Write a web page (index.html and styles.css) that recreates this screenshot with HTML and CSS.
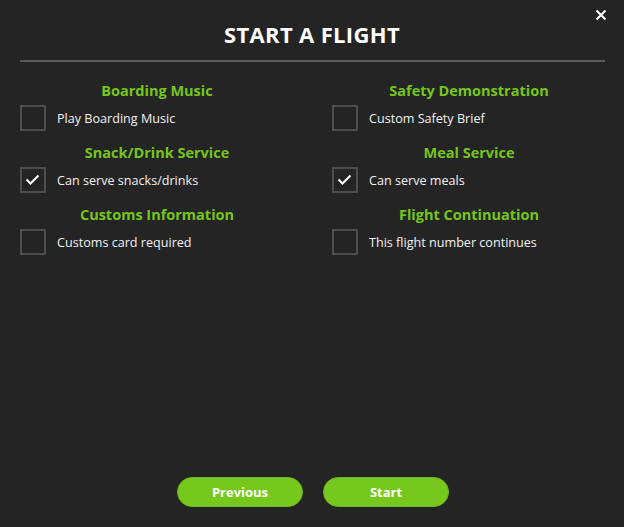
FILE: index.html
```html
<!DOCTYPE html>
<html lang="en">
<head>
<meta charset="utf-8">
<title>Start a Flight</title>
<link rel="stylesheet" href="styles.css">
</head>
<body>
<div class="dialog">
  <header class="header">
    <h1 class="title">START A FLIGHT</h1>
    <button class="close" aria-label="Close">
      <svg width="12" height="12" viewBox="0 0 12 12"><path d="M1.5 1.5 L10.5 10.5 M10.5 1.5 L1.5 10.5" stroke="#fff" stroke-width="2" fill="none"/></svg>
    </button>
  </header>
  <div class="divider"></div>
  <div class="options">
    <section class="option">
      <h2 class="option-title">Boarding Music</h2>
      <label class="row"><span class="box"></span><span class="label">Play Boarding Music</span></label>
    </section>
    <section class="option">
      <h2 class="option-title">Safety Demonstration</h2>
      <label class="row"><span class="box"></span><span class="label">Custom Safety Brief</span></label>
    </section>
    <section class="option">
      <h2 class="option-title">Snack/Drink Service</h2>
      <label class="row"><span class="box"><svg class="check" width="26" height="26" viewBox="0 0 26 26"><path d="M6.5 12.5 L10.5 16.5 L18.5 8.5" stroke="#fff" stroke-width="2" fill="none"/></svg></span><span class="label">Can serve snacks/drinks</span></label>
    </section>
    <section class="option">
      <h2 class="option-title">Meal Service</h2>
      <label class="row"><span class="box"><svg class="check" width="26" height="26" viewBox="0 0 26 26"><path d="M6.5 12.5 L10.5 16.5 L18.5 8.5" stroke="#fff" stroke-width="2" fill="none"/></svg></span><span class="label">Can serve meals</span></label>
    </section>
    <section class="option">
      <h2 class="option-title">Customs Information</h2>
      <label class="row"><span class="box"></span><span class="label">Customs card required</span></label>
    </section>
    <section class="option">
      <h2 class="option-title">Flight Continuation</h2>
      <label class="row"><span class="box"></span><span class="label">This flight number continues</span></label>
    </section>
  </div>
  <div class="actions">
    <button class="btn">Previous</button>
    <button class="btn">Start</button>
  </div>
</div>
</body>
</html>
```
FILE: styles.css
```css
* { box-sizing: border-box; }
html, body {
  margin: 0;
  padding: 0;
  background: #242424;
}
body {
  font-family: "Open Sans", "Noto Sans", sans-serif;
  color: #fff;
}
.dialog {
  width: 624px;
  height: 527px;
  display: flex;
  flex-direction: column;
}
.header {
  position: relative;
  padding: 21px 0 13px;
  display: flex;
  justify-content: center;
}
.title {
  margin: 0;
  font-size: 22px;
  line-height: 26px;
  font-weight: 700;
  letter-spacing: 0.35px;
}
.close {
  position: absolute;
  top: 9px;
  right: 17px;
  width: 12px;
  height: 12px;
  padding: 0;
  border: 0;
  background: none;
  display: flex;
}
.divider {
  height: 2px;
  margin: 0 19px 0 20px;
  background: #5a5a5a;
}
.options {
  display: grid;
  grid-template-columns: 274px 274px;
  column-gap: 38px;
  row-gap: 12px;
  padding: 19px 0 0 20px;
}
.option {
  display: flex;
  flex-direction: column;
  gap: 4px;
}
.option-title {
  margin: 0;
  text-align: center;
  color: #74c61b;
  font-size: 14.5px;
  line-height: 20px;
  font-weight: 700;
}
.row {
  display: flex;
  align-items: center;
  gap: 11px;
}
.box {
  width: 26px;
  height: 26px;
  border: 2px solid #4d4d4d;
  position: relative;
  flex: none;
}
.check {
  position: absolute;
  top: -2px;
  left: -2px;
}
.label {
  font-size: 12.6px;
  color: #f2f2f2;
}
.actions {
  margin-top: auto;
  padding: 0 0 20px 2px;
  display: flex;
  justify-content: center;
  gap: 20px;
}
.btn {
  width: 126px;
  height: 30px;
  border-radius: 15px;
  border: 1px solid #6cb51a;
  background: #76c81c;
  color: #fff;
  font-family: "Open Sans", "Noto Sans", sans-serif;
  font-weight: 700;
  font-size: 13px;
  padding: 0;
}
```
